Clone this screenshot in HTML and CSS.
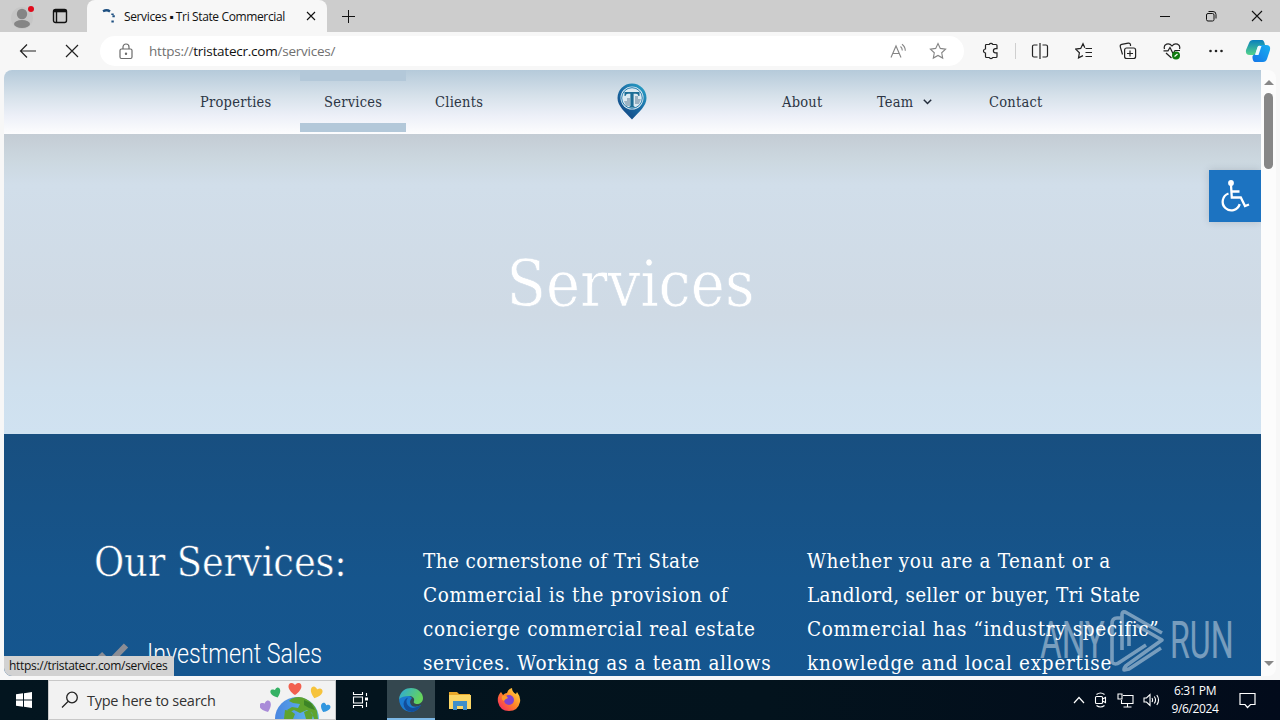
FILE: index.html
```
<!DOCTYPE html>
<html lang="en">

<head>
    <meta charset="utf-8">
    <title>Services ▪ Tri State Commercial</title>
    <link rel="stylesheet" href="styles.css">
</head>

<body>
    <div class="tabbar">
        <svg class="profile" width="28" height="30" viewBox="0 0 28 30">
            <circle cx="14" cy="17" r="11" fill="#c6c6c6" />
            <circle cx="14" cy="13" r="5.2" fill="#858585" />
            <ellipse cx="14" cy="23" rx="8" ry="4" fill="#858585" />
            <circle cx="23" cy="8" r="3" fill="#e00b1c" />
        </svg>
        <svg class="workspaces" width="16" height="16" viewBox="0 0 16 16" fill="none" stroke="#111" stroke-width="1.4">
            <rect x="1.5" y="1.5" width="13" height="13" rx="2" />
            <path d="M1.5 3h13" stroke-width="2.6" />
            <path d="M4.500 4v10" />
        </svg>
        <div class="tab">
            <svg width="14" height="14" viewBox="0 0 14 14" fill="none" stroke="#1d4f80" stroke-width="2.4">
                <path d="M1 2.2Q5 .2 8 2.5" />
                <path d="M10.5 4.5v1.6M11.6 6.3v2M10.6 11.5v2" />
            </svg>
            <span class="tab-title">Services ▪ Tri State Commercial</span>
            <svg width="10" height="10" viewBox="0 0 10 10" stroke="#111" stroke-width="1.1">
                <path d="M1 1l8 8M9 1l-8 8" />
            </svg>
        </div>
        <svg class="newtab" width="15" height="15" viewBox="0 0 15 15" stroke="#111">
            <path d="M7.5 1v13M1 7.5h13" />
        </svg>
        <div class="window-buttons">
            <svg width="12" height="12" viewBox="0 0 12 12" stroke="#111"><path d="M1 6.5h10" /></svg>
            <svg width="12" height="12" viewBox="0 0 12 12" fill="none" stroke="#111">
                <rect x="1.5" y="3.5" width="7.5" height="7.5" rx="1.5" />
                <path d="M3.5 1.5h4.5a3 3 0 0 1 3 3v4" />
            </svg>
            <svg width="12" height="12" viewBox="0 0 12 12" stroke="#111" stroke-width="1.1"><path d="M1 1l10 10M11 1L1 11" /></svg>
        </div>
    </div>

    <div class="toolbar">
        <svg class="back" width="18" height="16" viewBox="0 0 18 16" fill="none" stroke="#222" stroke-width="1.2">
            <path d="M8 1.5L1.5 8 8 14.5M1.5 8H17" />
        </svg>
        <svg class="stop" width="14" height="14" viewBox="0 0 14 14" stroke="#222" stroke-width="1.2">
            <path d="M1 1l12 12M13 1L1 13" />
        </svg>
        <div class="address">
            <svg width="14" height="17" viewBox="0 0 14 17" fill="none" stroke="#6b6b6b" stroke-width="1.2">
                <rect x="1" y="6" width="12" height="9.5" rx="1.5" />
                <path d="M4 6V4a3 3 0 0 1 6 0v2" />
                <circle cx="7" cy="10.8" r=".6" fill="#6b6b6b" />
            </svg>
            <span class="url">https://<b>tristatecr.com</b>/services/</span>
            <svg class="read" width="17" height="16" viewBox="0 0 17 16" fill="none" stroke="#858585" stroke-width="1.1">
                <path d="M1 14.5L6 3l5 11.5M3 10.5h6M10.5 3.5q1.8 1.5 1.8 4M12 1.2q3.3 2.5 3.3 6.6" />
            </svg>
            <svg width="18" height="18" viewBox="0 0 18 18" fill="none" stroke="#858585" stroke-width="1.1">
                <path d="M9 1.5l2.3 4.9 5.3.7-3.9 3.7 1 5.3L9 13.5l-4.700 2.600 1-5.300L1.400 7.100l5.300-.7z" />
            </svg>
        </div>
        <div class="tools">
            <svg width="18" height="18" viewBox="0 0 18 18" fill="none" stroke="#222" stroke-width="1.2">
                <path d="M4 2.500h3.200a2 2 0 0 1 3.600 0H14a1 1 0 0 1 1 1v3.200h-1.500a2 2 0 0 0 0 4.200H15v3.600a1 1 0 0 1-1 1h-3.200a2 2 0 0 1-3.600 0H4.500a1 1 0 0 1-1-1V11a2 2 0 0 1 0-4V3.500a1 1 0 0 1 .5-1z" />
            </svg>
            <i class="divider"></i>
            <svg width="18" height="18" viewBox="0 0 18 18" fill="none" stroke="#222" stroke-width="1.2">
                <path d="M6.500 3H3a1.500 1.500 0 0 0-1.500 1.500v9A1.500 1.500 0 0 0 3 15h3.500M11.500 3H15a1.500 1.500 0 0 1 1.500 1.500v9A1.500 1.500 0 0 1 15 15h-3.500M9 1v16" />
            </svg>
            <svg width="18" height="18" viewBox="0 0 18 18" fill="none" stroke="#222" stroke-width="1.2">
                <path d="M9.800 5.800L8 1.700 5.700 6.400l-5 .7 3.700 3.600-.9 5.200L8 13.600M10.500 6.500H17M10.500 10.500H17M10.500 14.500H17" />
            </svg>
            <svg width="18" height="18" viewBox="0 0 18 18" fill="none" stroke="#222" stroke-width="1.2">
                <path d="M3.500 12.500L1.300 4.800a2 2 0 0 1 1.400-2.400l6.500-1.300a2 2 0 0 1 2.300 1.600v1.200" />
                <rect x="5.600" y="6" width="11" height="10.500" rx="2" />
                <path d="M11 8.500v6M8 11.500h6" />
            </svg>
            <svg width="18" height="18" viewBox="0 0 18 18" fill="none" stroke="#222" stroke-width="1.2">
                <path d="M1.500 7C0 2 6 0 9 4c3-4 9-2 7.500 3M.5 8.800H5L7 5.500l3 6 2-3h5M3 11l5.500 5" />
                <circle cx="13" cy="13.500" r="4" fill="#107c10" stroke="none" />
                <path d="M11.500 14.500l3-2.500" stroke="#fff" />
            </svg>
            <svg width="18" height="18" viewBox="0 0 18 18" fill="#222">
                <circle cx="3.500" cy="9" r="1.300" /><circle cx="9" cy="9" r="1.300" /><circle cx="14.500" cy="9" r="1.300" />
            </svg>
        </div>
        <svg class="copilot" width="26" height="24" viewBox="0 0 26 24">
            <defs>
                <linearGradient id="cp1" x1="0" y1="0" x2="0" y2="1"><stop offset="0" stop-color="#087fbd" /><stop offset="1" stop-color="#54d48b" /></linearGradient>
                <linearGradient id="cp2" x1="1" y1="0" x2="0" y2="1"><stop offset="0" stop-color="#16b0f0" /><stop offset="1" stop-color="#1475e8" /></linearGradient>
            </defs>
            <path d="M8 1h9q2 0 3 5h-4q-3 0-4 4l-2 6H5q-5 0-4-5l3-7q1-3 4-3z" fill="url(#cp1)" />
            <path d="M18 23H10q-2 0-2.500-4-.5-3 2-3.500 2-.5 3-3.500l2-6h6.500q5 0 4 5l-3 9q-1 3-4 3z" fill="url(#cp2)" />
            <path d="M13 7h3.500l-3 9H10z" fill="#eefaff" />
        </svg>
    </div>

    <div class="viewport">
        <div class="page">
            <nav class="nav">
                <a class="nav-item properties">Properties</a>
                <a class="nav-item services active">Services</a>
                <a class="nav-item clients">Clients</a>
                <svg class="logo" width="30" height="37" viewBox="0 0 30 37">
                    <defs>
                        <linearGradient id="pin" x1="1" y1="0" x2="0.2" y2="1"><stop offset="0" stop-color="#2ba9cc" /><stop offset=".5" stop-color="#1b6ea6" /><stop offset="1" stop-color="#124481" /></linearGradient>
                    </defs>
                    <path d="M15 .5a14.500 14.500 0 0 1 14.500 14.500c0 8-7.500 14-14.500 21.500C8 29 .5 23 .5 15A14.500 14.500 0 0 1 15 .5z" fill="url(#pin)" />
                    <circle cx="15" cy="15" r="11.500" fill="#dce9f1" />
                    <circle cx="15" cy="15" r="10.300" fill="none" stroke="#2c82b2" />
                    <path d="M7 18h3v-3h3v8H9zM18 13h3v3h3l-2 5h-4z" fill="#9db3c3" />
                    <path d="M7.500 9h15v4h-1q-.5-2.200-2.500-2.200h-2.400V23l2 1.500h-7.200l2-1.500V10.800H11q-2 0-2.500 2.200h-1z" fill="#1c6d96" />
                </svg>
                <a class="nav-item about">About</a>
                <a class="nav-item team">Team
                    <svg width="9" height="6" viewBox="0 0 9 6" fill="none" stroke="#222b3a" stroke-width="1.500"><path d="M.8.8l3.700 3.700L8.200.8" /></svg>
                </a>
                <a class="nav-item contact">Contact</a>
            </nav>
            <header class="hero">
                <h1>Services</h1>
            </header>
            <main class="content">
                <section class="col-list">
                    <h2>Our Services:</h2>
                    <div class="service">
                        <svg width="32" height="25" viewBox="0 0 32 25" fill="none" stroke="#8b8d95" stroke-width="6"><path d="M3 12l9 9L29 3.500" /></svg>
                        <span>Investment Sales</span>
                    </div>
                </section>
                <p class="col-a">
                    <span class="a1">The cornerstone of Tri State</span><br>
                    Commercial is the provision of<br>
                    concierge commercial real estate<br>
                    services. Working as a team allows
                </p>
                <p class="col-b">
                    Whether you are a Tenant or a<br>
                    <span class="b2">Landlord, seller or buyer, Tri State</span><br>
                    Commercial has “industry specific”<br>
                    <span class="b4">knowledge and local expertise</span>
                </p>
            </main>
            <div class="accessibility">
                <svg width="30" height="34" viewBox="0 0 30 34" fill="none" stroke="#fff" stroke-width="2.3">
                    <circle cx="11" cy="4" r="2.900" fill="#fff" stroke="none" />
                    <path d="M11 6l.8 12.500h9L25 27l4-1.500M11.500 12.500h8" />
                    <path d="M8.500 14.500a8.700 8.700 0 1 0 11.200 10.700" />
                </svg>
            </div>
            <div class="status">https://tristatecr.com/services</div>
        </div>
        <div class="scrollbar">
            <i class="arrow-up"></i>
            <i class="thumb"></i>
            <i class="arrow-down"></i>
        </div>
    </div>

    <div class="watermark">
        <span>ANY</span>
        <svg width="58" height="62" viewBox="0 0 58 62" fill="none" stroke="#fff" stroke-width="3.6" stroke-linejoin="round">
            <path d="M13 8H9q-5 0-5 6v38q3 4 8 0l26-17" />
            <path d="M14 40V5q0-5 5-2l35 20" />
            <path d="M21 36V14M28 15l26 15-35 25q-3 2-3 5l5-1 32-21" />
        </svg>
        <span class="run">RUN</span>
    </div>

    <div class="taskbar">
        <div class="start">
            <svg width="16" height="16" viewBox="0 0 16 16" fill="#fff">
                <path d="M0 2.300L7 1.300v6.200H0zM8 1.200L16 0v7.500H8zM0 8.500h7v6.200l-7-1zM8 8.500h8V16l-8-1.200z" />
            </svg>
        </div>
        <div class="search">
            <svg width="18" height="18" viewBox="0 0 18 18" fill="none" stroke="#222" stroke-width="1.3">
                <circle cx="11" cy="6.500" r="5.300" /><path d="M7 10.500L1 16.500" />
            </svg>
            <span>Type here to search</span>
            <svg class="earth" width="74" height="38" viewBox="0 0 74 38">
                <defs>
                    <linearGradient id="sea"><stop offset="0" stop-color="#4a86e0" /><stop offset="1" stop-color="#62bdf0" /></linearGradient>
                    <path id="heart" d="M0 6C-9 0-7-6-3.500-6-1.500-6 0-4 0-4S1.500-6 3.500-6C7-6 9 0 0 6z" />
                </defs>
                <circle cx="37" cy="38" r="22" fill="url(#sea)" />
                <path d="M31 18q8-4 15 0 8 4 11 12l1 8h-4l-2-6-5-3-7 3-6-3-4 2-3-2 5-3 6 1 2-4-7-1-4-2z" fill="#5fa32e" />
                <path d="M25 29l6 1 4 3-2 5h-9zM44 31l5-2 4 5-1 4h-6z" fill="#5fa32e" />
                <path d="M44 19l7 3 4 7-6-2-5-3z" fill="#3c8426" />
                <use href="#heart" x="35" y="8" fill="#f2604f" />
                <use href="#heart" transform="translate(16 12) rotate(-20) scale(.78)" fill="#35b164" />
                <use href="#heart" transform="translate(56 12) rotate(18) scale(.92)" fill="#f6c33b" />
                <use href="#heart" transform="translate(6 26) rotate(-22) scale(.9)" fill="#a98bd8" />
                <use href="#heart" transform="translate(65 27) rotate(24) scale(.75)" fill="#3196df" />
            </svg>
        </div>
        <div class="task">
            <svg width="17" height="18" viewBox="0 0 17 18" fill="none" stroke="#fff" stroke-width="1.100">
                <path d="M1.500 1v2.500h9V1M1.500 17v-2.500h9V17M1.500 6h9v6h-9zM14.500 2v3M14.500 11v5" /><path d="M13 6.500h3v3h-3z" fill="#fff" stroke="none" />
            </svg>
        </div>
        <div class="task running">
            <svg width="24" height="24" viewBox="0 0 24 24">
                <defs>
                    <linearGradient id="edge" x1="0" y1="0" x2="1" y2=".4"><stop offset="0" stop-color="#2ba9dd" /><stop offset="1" stop-color="#65d45b" /></linearGradient>
                </defs>
                <path d="M0 11q1-3 5-4 6 0 8 3-4 4 0 8 4 2 9-1-4 7-10 7Q1 23 0 11z" fill="#1b7bd0" />
                <path d="M9 9.500q-3 4 0 8 4 5 13-.5-3 6-9 7-8-1-8.500-8Q5 11 9 9.500z" fill="#124e9b" />
                <path d="M0 11C1 3 7 0 12 0c7 0 12 5 12 10 0 4-3 6-6 6-2 0-4-1-3-3 1-3-2-5-5-5-4 0-8 1-10 3z" fill="url(#edge)" />
            </svg>
        </div>
        <div class="task">
            <svg width="22" height="19" viewBox="0 0 22 19">
                <path d="M0 1h8l2 2h11v15H0z" fill="#e9a82a" /><path d="M0 4h22v14H0z" fill="#fbd666" />
                <path d="M4 10h14v9h-4v-4H8v4H4z" fill="#3e8fc9" />
            </svg>
        </div>
        <div class="task">
            <svg width="24" height="24" viewBox="0 0 24 24">
                <defs>
                    <linearGradient id="fox" x1="1" y1="0" x2="0" y2="1"><stop offset="0" stop-color="#ffe545" /><stop offset=".5" stop-color="#ff8426" /><stop offset="1" stop-color="#f5196b" /></linearGradient>
                </defs>
                <path d="M4 4l2 3q2-2 4-2 1-4 5-5 0 4 4 6l1-2q4 5 3 10-2 9-11 9T1 14Q0 8 4 4z" fill="url(#fox)" />
                <circle cx="12" cy="12" r="5" fill="#8142cf" />
                <path d="M5 8q5-1 6 2-3 1-4 3-3-1-2-5z" fill="#ff9b29" />
            </svg>
        </div>
        <div class="tray">
            <svg width="12" height="8" viewBox="0 0 12 8" fill="none" stroke="#fff" stroke-width="1.2"><path d="M1 7l5-5.500L11 7" /></svg>
            <svg width="14" height="18" viewBox="0 0 14 18" fill="none" stroke="#fff" stroke-width="1.1">
                <rect x="1.500" y="5.500" width="7" height="7" rx="1" /><path d="M8.500 8l3-1.500v5l-3-1.500M2.500 3.500q4-3 8 0M2.500 14.500q4 3 8 0" />
            </svg>
            <svg width="17" height="15" viewBox="0 0 17 15" fill="none" stroke="#fff" stroke-width="1.1">
                <path d="M6 2.500h10v8H4.500V7M10.500 11v3M6.500 14h8M1 1h4v5H1z" />
            </svg>
            <svg width="17" height="14" viewBox="0 0 17 14" fill="none" stroke="#fff" stroke-width="1.1">
                <path d="M1 5h2.500L7 1.500v11L3.500 9H1zM9 5q1.200 2 0 4M11.300 3.500q2.500 3.500 0 7M13.800 2q3.500 5 0 10" />
            </svg>
        </div>
        <div class="clock">6:31 PM<br>9/6/2024</div>
        <svg class="action" width="17" height="17" viewBox="0 0 17 17" fill="none" stroke="#fff" stroke-width="1.2">
            <path d="M1 1.500h15v11h-4.500l-3 3-2.500-3H1z" />
        </svg>
    </div>
</body>

</html>
```
FILE: styles.css
```
body {
    margin: 0;
    width: 1280px;
    height: 720px;
    overflow: hidden;
    position: relative;
    background: #f7f7f7;
    font-family: "Open Sans", "Noto Sans", sans-serif;
}

svg {
    display: block;
    flex: none;
}

.tabbar {
    height: 32px;
    display: flex;
    align-items: center;
    background: #cdcdcd;
}

.profile {
    margin-left: 8px;
}

.workspaces {
    margin-left: 16px;
}

.tab {
    box-sizing: border-box;
    width: 240px;
    height: 32px;
    margin-left: 19px;
    padding: 0 11px 0 15px;
    display: flex;
    align-items: center;
    background: #f7f7f7;
    border-radius: 8px 8px 0 0;
}

.tab-title {
    flex: 1;
    margin-left: 8px;
    font-size: 12px;
    letter-spacing: -0.37px;
    white-space: nowrap;
    color: #111;
}

.newtab {
    margin-left: 14px;
}

.window-buttons {
    margin-left: auto;
    padding-right: 17px;
    display: flex;
    gap: 34px;
}

.toolbar {
    height: 38px;
    display: flex;
    align-items: center;
    background: #f7f7f7;
}

.back {
    margin-left: 19px;
}

.stop {
    margin-left: 28px;
}

.address {
    box-sizing: border-box;
    width: 864px;
    height: 30px;
    margin-left: 21px;
    padding: 0 17px 0 19px;
    display: flex;
    align-items: center;
    background: #fff;
    border-radius: 15px;
}

.url {
    flex: 1;
    margin-left: 16px;
    font-size: 13.5px;
    letter-spacing: -0.23px;
    color: #707070;
}

.url b {
    font-weight: normal;
    color: #111;
}

.read {
    margin-right: 22px;
}

.tools {
    display: flex;
    align-items: center;
    margin-left: 18px;
    gap: 26px;
}

.divider {
    width: 1px;
    height: 16px;
    margin: 0 -11px 0 -11px;
    background: #cfcfcf;
}

.copilot {
    margin-left: 20px;
}

.viewport {
    height: 606px;
    margin: 0 4px 4px;
    display: flex;
    overflow: hidden;
    border-radius: 8px;
    background: #fcfcfc;
}

.page {
    width: 1257px;
    position: relative;
    overflow: hidden;
    font-family: "DejaVu Serif Condensed", "DejaVu Serif", serif;
}

.nav {
    height: 64px;
    display: flex;
    align-items: center;
    background: linear-gradient(#b5cada, #d6e1ea 40%, #edf0f8 72%, #fdfdfe);
}

.nav-item {
    height: 62px;
    box-sizing: border-box;
    display: flex;
    align-items: center;
    font-size: 14.5px;
    letter-spacing: 0.25px;
    white-space: nowrap;
    color: #2c3544;
}

.properties {
    width: 100px;
    margin-left: 196px;
}

.services {
    width: 106px;
    margin-bottom: 2px;
    padding-left: 24px;
}

.active {
    border-top: 11px solid #b3c8d9;
    border-bottom: 9px solid #b3c8d9;
}

.clients {
    margin-left: 29px;
    width: 182px;
}

.logo {
    margin-bottom: 1px;
}

.about {
    margin-left: 135px;
    width: 95px;
}

.team {
    width: 112px;
    gap: 10px;
}

.hero {
    height: 300px;
    display: flex;
    align-items: center;
    justify-content: center;
    background: linear-gradient(#c4ccd4, #ccd8e0 9%, #d1deea 17%, #cfdae5 60%, #cfe0ee 85%, #d0e2f1);
}

.hero h1 {
    margin: 0 4px 0 0;
    font-size: 64px;
    font-weight: normal;
    line-height: 70px;
    color: #fff;
    -webkit-text-stroke: 0.6px #cfdbe7;
}

.content {
    height: 242px;
    display: flex;
    background: linear-gradient(#184f80, #16558c 60%, #15568f);
    color: #fff;
}

.col-list {
    width: 329px;
    margin-left: 90px;
}

.content h2 {
    margin: 99px 0 0;
    font-size: 41px;
    font-weight: normal;
    line-height: 58px;
    letter-spacing: -0.15px;
    white-space: nowrap;
    -webkit-text-stroke: 0.5px #165287;
}

.service {
    margin-top: 46px;
    padding-left: 3px;
    display: flex;
    align-items: center;
    gap: 18px;
    font-family: Roboto, sans-serif;
    font-size: 28px;
    font-weight: 300;
    line-height: 34px;
    white-space: nowrap;
}

.service span {
    transform: scaleX(0.83);
    transform-origin: left;
}

.content p {
    margin: 110px 0 0;
    width: 384px;
    font-size: 20.5px;
    line-height: 34px;
    letter-spacing: 0.63px;
    white-space: nowrap;
}

.content .a1 {
    letter-spacing: 0.4px;
}

.content .b2 {
    letter-spacing: 0.22px;
}

.content .b4 {
    letter-spacing: 0.72px;
}

.accessibility {
    position: absolute;
    top: 100px;
    right: 0;
    width: 52px;
    height: 52px;
    display: flex;
    align-items: center;
    justify-content: center;
    background: #1c73c1;
    box-shadow: 0 0 8px rgba(0, 0, 0, 0.15);
}

.status {
    position: absolute;
    left: 0;
    bottom: 0;
    box-sizing: border-box;
    width: 170px;
    height: 20px;
    padding-left: 5px;
    background: #d2d2d2;
    border-top-right-radius: 3px;
    font: 12px/20px "Open Sans", sans-serif;
    letter-spacing: -0.3px;
    white-space: nowrap;
    color: #111;
}

.scrollbar {
    width: 15px;
    display: flex;
    flex-direction: column;
    align-items: center;
}

.arrow-up {
    margin-top: 10px;
    border: 5px solid transparent;
    border-top: 0;
    border-bottom: 5px solid #878787;
}

.thumb {
    width: 9px;
    height: 76px;
    margin-top: 8px;
    border-radius: 5px;
    background: #878787;
}

.arrow-down {
    margin-top: auto;
    margin-bottom: 10px;
    border: 5px solid transparent;
    border-bottom: 0;
    border-top: 5px solid #878787;
}

.watermark {
    position: absolute;
    left: 1040px;
    top: 610px;
    width: 192px;
    height: 62px;
    display: flex;
    align-items: center;
    opacity: 0.42;
    color: #fff;
    font: 51px/64px Roboto, sans-serif;
}

.watermark span {
    width: 68px;
    transform: scaleX(0.65);
    transform-origin: left;
}

.watermark .run {
    margin-left: 4px;
    transform: scaleX(0.63);
}

.taskbar {
    height: 40px;
    display: flex;
    align-items: center;
    background: linear-gradient(90deg, #03151f, #03131d 60%, #020b1b);
    color: #fff;
}

.start {
    width: 48px;
    display: flex;
    justify-content: center;
}

.search {
    box-sizing: border-box;
    width: 288px;
    height: 40px;
    padding-left: 12px;
    display: flex;
    align-items: center;
    background: #f2f2f2;
    border: 1px solid #c8c8c8;
    font-size: 14.5px;
    letter-spacing: -0.25px;
    color: #333;
}

.search span {
    flex: 1;
    margin-left: 8px;
    white-space: nowrap;
}

.earth {
    margin-right: 1px;
}

.task {
    box-sizing: border-box;
    width: 48px;
    height: 40px;
    margin-right: 1px;
    display: flex;
    align-items: center;
    justify-content: center;
}

.running {
    margin-left: 2px;
    padding-top: 2px;
    background: #34474f;
    border-bottom: 2px solid #7cb8e6;
}

.tray {
    margin-left: auto;
    display: flex;
    align-items: center;
    gap: 9px;
}

.clock {
    width: 70px;
    font-size: 12px;
    line-height: 18px;
    letter-spacing: -0.4px;
    text-align: center;
}

.action {
    margin: 0 24px 0 9px;
}
```
